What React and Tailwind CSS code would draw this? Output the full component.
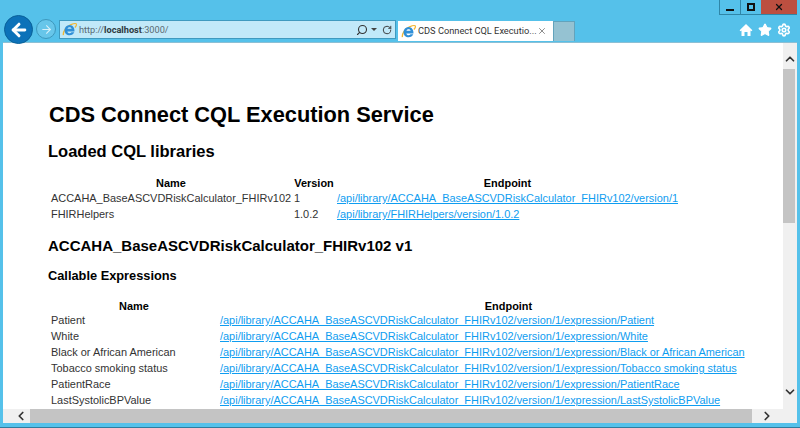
import React from "react";
import { Search, RotateCw, X, Star, Settings, ChevronUp, ChevronDown, ChevronLeft, ChevronRight, ArrowLeft, ArrowRight } from "lucide-react";

const IeLogo = ({ s = 15 }) => (
  <svg width={s} height={s} viewBox="0 0 16 16" className="shrink-0">
    <path d="M1.500 14C.8 11 4 5 9 3c3-1.200 5.800-1.900 6.300-.8.400.9-.6 2.600-1.500 3.600" fill="none" stroke="#f2b632" strokeWidth="1.400" />
    <path d="M8.200 3.200a5.400 5.400 0 0 0-5.500 5.600c0 3.200 2.400 5.400 5.400 5.400 2.300 0 4.200-1.200 5-3.200h-3c-.5.700-1.200 1-2 1-1.200 0-2.200-.8-2.400-2h7.600c.3-3.700-2-6.800-5.100-6.800zM5.800 7.300c.2-1.100 1.100-1.800 2.300-1.800s2 .7 2.200 1.800z" fill="#2f8fd8" />
  </svg>
);

const HomeIcon = () => (
  <svg width="14" height="14" viewBox="0 0 14 14" className="shrink-0">
    <path d="M7 1 .6 7.200l1 1L2.500 7.400V13h3V9h3v4h3V7.400l.9.8 1-1z" fill="#fff" />
  </svg>
);

const libs = [
  ["ACCAHA_BaseASCVDRiskCalculator_FHIRv102", "1", "/api/library/ACCAHA_BaseASCVDRiskCalculator_FHIRv102/version/1"],
  ["FHIRHelpers", "1.0.2", "/api/library/FHIRHelpers/version/1.0.2"],
];
const base = "/api/library/ACCAHA_BaseASCVDRiskCalculator_FHIRv102/version/1/expression/";
const exprs = ["Patient", "White", "Black or African American", "Tobacco smoking status", "PatientRace", "LastSystolicBPValue"];

const linkCls = "text-[#0f9df0] underline";
const thCls = "font-bold text-black text-center h-[15px] p-0 pr-[3px] pt-[2px] leading-[13px]";
const thLowCls = "font-bold text-black text-center h-[15px] p-0 pr-[3px] pt-[3px] leading-[12px]";
const tdCls = "h-4 p-0 leading-4 whitespace-nowrap";

export default function App() {
  return (
    <div className="w-[800px] h-[428px] bg-[#55c1ea] flex flex-col overflow-hidden border-b border-[#2f7c9e]" style={{ fontFamily: '"Liberation Sans", Arial, sans-serif' }}>
      {/* window buttons */}
      <div className="h-4 flex justify-end pr-[3px] shrink-0">
        <div className="w-[22px] h-[15px] border border-t-0 border-[#2f86a8] flex items-end justify-center pb-[3px]">
          <div className="w-2 h-[2px] bg-[#111]" />
        </div>
        <div className="w-5 h-[15px] border-b border-[#2f86a8] flex items-center justify-center">
          <div className="w-2 h-2 border-2 border-[#111]" />
        </div>
        <div className="w-9 h-[15px] bg-[#bc4f40] border-b border-[#2f86a8] flex items-center justify-center">
          <X size={10} strokeWidth={3} color="#111" />
        </div>
      </div>

      {/* toolbar */}
      <div className="h-[26px] flex items-start shrink-0 pl-[59px] relative">
        <div className="absolute left-1 top-[-1px] w-[29px] h-[29px] rounded-full bg-[#0c72b9] border border-[#0a6199] flex items-center justify-center z-10">
          <ArrowLeft size={20} strokeWidth={3.5} color="#fff" />
        </div>
        <div className="absolute left-9 top-[3px] w-5 h-5 rounded-full border border-[#3d98bd] bg-[#67c6ea] flex items-center justify-center">
          <ArrowRight size={13} strokeWidth={2} color="#d6f0fa" />
        </div>
        <div className="w-[337px] h-[19px] mt-[4px] bg-[#c1e9f9] border border-[#3f9abf] flex items-center pl-[2px] pr-[3px] shrink-0">
          <IeLogo />
          <span className="ml-[2px] text-[9.200px] text-[#5a6a72] whitespace-nowrap" style={{ fontFamily: 'Roboto, sans-serif' }}>http://<b className="text-[#2f3a40]">localhost</b>:3000/</span>
          <div className="ml-auto flex items-center text-[#333]">
            <Search size={12} strokeWidth={2.2} className="-scale-x-100" />
            <div className="w-0 h-0 ml-[3px] mr-[5px] border-x-[3px] border-x-transparent border-t-[3px] border-t-[#444]" />
            <RotateCw size={10} strokeWidth={2.2} />
          </div>
        </div>
        <div className="ml-[2px] w-[155px] h-5 mt-[5px] bg-white flex items-center pl-[3px] pr-[3px] shrink-0">
          <IeLogo />
          <span className="ml-[2px] text-[9.250px] text-[#333] whitespace-nowrap" style={{ fontFamily: 'Roboto, sans-serif' }}>CDS Connect CQL Executio...</span>
          <X size={10} strokeWidth={2} color="#777" className="ml-auto mr-[5px] shrink-0" />
        </div>
        <div className="w-[22px] h-5 mt-[5px] bg-[#95c2d2] border border-b-0 border-[#62a3bc] shrink-0" />
        <div className="ml-auto mt-[7px] flex items-center gap-[5px] pr-[9px] text-white">
          <HomeIcon />
          <Star size={14} strokeWidth={2} fill="#fff" />
          <Settings size={14} strokeWidth={2.8} />
        </div>
      </div>

      {/* viewport */}
      <div className="mx-[3px] flex-1 min-h-0 bg-white flex flex-col border-t border-[#8cbfd4]">
        <div className="flex-1 min-h-0 flex">
          <main className="flex-1 min-w-0 overflow-hidden pl-[45px] pt-[60px] text-[10.950px] text-[#333]">
            <h1 className="ml-[1px] text-[21.800px] leading-6 font-bold text-black whitespace-nowrap">CDS Connect CQL Execution Service</h1>
            <h2 className="text-[16.500px] leading-5 font-bold text-black mt-[14px] whitespace-nowrap">Loaded CQL libraries</h2>
            <table className="mt-[14px] ml-[3px] border-collapse">
              <thead>
                <tr>
                  <th className={`${thCls} w-[243px]`}>Name</th>
                  <th className={`${thCls} w-[43px]`}>Version</th>
                  <th className={`${thCls} w-[344px]`}>Endpoint</th>
                </tr>
              </thead>
              <tbody>
                {libs.map((l) => (
                  <tr key={l[0]}>
                    <td className={tdCls}>{l[0]}</td>
                    <td className={tdCls}>{l[1]}</td>
                    <td className={tdCls}><a className={linkCls}>{l[2]}</a></td>
                  </tr>
                ))}
              </tbody>
            </table>
            <h2 className="text-[15px] leading-5 font-bold text-black mt-[14px] whitespace-nowrap">ACCAHA_BaseASCVDRiskCalculator_FHIRv102 v1</h2>
            <h3 className="text-[12.800px] leading-4 font-bold text-black mt-[12px]">Callable Expressions</h3>
            <table className="mt-[13px] ml-[3px] border-collapse w-[749px] table-fixed">
              <thead>
                <tr>
                  <th className={`${thLowCls} w-[169px]`}>Name</th>
                  <th className={`${thLowCls} w-[580px]`}>Endpoint</th>
                </tr>
              </thead>
              <tbody>
                {exprs.map((e) => (
                  <tr key={e}>
                    <td className={tdCls}>{e}</td>
                    <td className={tdCls}><a className={linkCls}>{base + e}</a></td>
                  </tr>
                ))}
              </tbody>
            </table>
          </main>
          <div className="w-[14px] bg-[#f0f0f0] flex flex-col items-center shrink-0">
            <div className="h-[26px] pt-[9px] shrink-0">
              <ChevronUp size={14} strokeWidth={3} color="#333" />
            </div>
            <div className="w-[12px] self-start h-[154px] bg-[#c4c4c4] shrink-0" />
            <ChevronDown size={14} strokeWidth={3} color="#333" className="mt-auto mb-[10px]" />
          </div>
        </div>
        <div className="h-[14px] bg-[#f0f0f0] flex items-center shrink-0">
          <div className="w-[27px] flex justify-center pl-[8px]">
            <ChevronLeft size={14} strokeWidth={3} color="#333" />
          </div>
          <div className="w-[722px] h-full bg-[#c4c4c4]" />
          <ChevronRight size={14} strokeWidth={3} color="#333" className="ml-[8px]" />
        </div>
      </div>
      <div className="h-1 shrink-0" />
    </div>
  );
}
